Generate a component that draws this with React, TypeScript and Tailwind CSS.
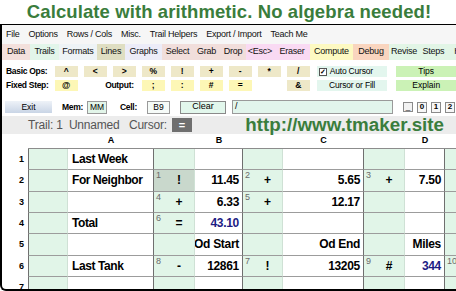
import React from 'react';

type Op = { idx?: string; sym?: string; sel?: boolean };
type Val = { text?: string; blue?: boolean };
type Row = { n: string; a?: string; ops: Op[]; vals: Val[] };

const tabs = [
  { label: 'Data', w: 'w-[28px]', bg: 'bg-[#f3e0dc]' },
  { label: 'Trails', w: 'w-[29px]', bg: 'bg-[#e2f5ea]' },
  { label: 'Formats', w: 'w-[38px]', bg: 'bg-[#eef3f6]' },
  { label: 'Lines', w: 'w-[28px]', bg: 'bg-[#dfdec2]' },
  { label: 'Graphs', w: 'w-[37px]', bg: 'bg-[#ececf8]' },
  { label: 'Select', w: 'w-[31px]', bg: 'bg-[#f1dedb]' },
  { label: 'Grab', w: 'w-[27px]', bg: 'bg-[#f1dedb]' },
  { label: 'Drop', w: 'w-[26px]', bg: 'bg-[#f1dedb]' },
  { label: '<Esc>', w: 'w-[28px]', bg: 'bg-[#f9daf3]' },
  { label: 'Eraser', w: 'w-[36px]', bg: 'bg-[#f9daf3]' },
  { label: 'Compute', w: 'w-[43px]', bg: 'bg-[#fdf9c2]' },
  { label: 'Debug', w: 'w-[36px]', bg: 'bg-[#f9d5bf]' },
  { label: 'Revise', w: 'w-[30px]', bg: 'bg-[#e2f5e6]' },
  { label: 'Steps', w: 'w-[29px]', bg: 'bg-[#e2f5e6]' },
  { label: 'Help', w: 'w-[30px]', bg: 'bg-[#e2f5e6]' },
];

const menu = ['File', 'Options', 'Rows / Cols', 'Misc.', 'Trail Helpers', 'Export / Import', 'Teach Me'];

const basicOps = ['^', '<', '>', '%', '!', '+', '-', '*', '/'];

const rows: Row[] = [
  { n: '1', a: 'Last Week', ops: [{}, {}, {}, {}], vals: [{}, {}, {}] },
  {
    n: '2',
    a: 'For Neighbor',
    ops: [{ idx: '1', sym: '!', sel: true }, { idx: '2', sym: '+' }, { idx: '3', sym: '+' }, {}],
    vals: [{ text: '11.45' }, { text: '5.65' }, { text: '7.50' }],
  },
  {
    n: '3',
    ops: [{ idx: '4', sym: '+' }, { idx: '5', sym: '+' }, {}, {}],
    vals: [{ text: '6.33' }, { text: '12.17' }, {}],
  },
  {
    n: '4',
    a: 'Total',
    ops: [{ idx: '6', sym: '=' }, {}, {}, {}],
    vals: [{ text: '43.10', blue: true }, {}, {}],
  },
  {
    n: '5',
    ops: [{}, {}, {}, {}],
    vals: [{ text: 'Od Start' }, { text: 'Od End' }, { text: 'Miles' }],
  },
  {
    n: '6',
    a: 'Last Tank',
    ops: [{ idx: '8', sym: '-' }, { idx: '7', sym: '!' }, { idx: '9', sym: '#' }, { idx: '10' }],
    vals: [{ text: '12861' }, { text: '13205' }, { text: '344', blue: true }],
  },
  { n: '7', ops: [{}, {}, {}, {}], vals: [{}, {}, {}] },
];

const cols = 'grid grid-cols-[26px_40px_86px_41px_48px_40px_81px_41px_40px_40px]';

function OpCell({ op }: { op: Op }) {
  return (
    <div
      className={`relative border-r border-r-[#cfe1d5] border-b border-b-[#9c9c9c] flex items-center justify-center pl-[10px] text-[12px] font-bold text-black ${
        op.sel ? 'bg-[#c9d8cc]' : 'bg-[#e1f5e8]'
      }`}
    >
      {op.idx && (
        <span className="absolute left-[2px] top-[1px] text-[9px] font-normal leading-none text-[#6a6a6a]">{op.idx}</span>
      )}
      {op.sym}
    </div>
  );
}

function ValCell({ v }: { v: Val }) {
  return (
    <div
      className={`bg-white border-r border-r-[#6f6f6f] border-b border-b-[#9c9c9c] flex items-center justify-end pr-[3px] whitespace-nowrap text-[12px] font-bold tracking-[-0.3px] ${
        v.blue ? 'text-[#1c1c84]' : 'text-black'
      }`}
    >
      {v.text}
    </div>
  );
}

export default function App() {
  return (
    <div className="w-[456px] h-[291px] overflow-hidden bg-white font-['Liberation_Sans',Arial,sans-serif] text-black">
      <div className="h-[24px] flex items-end justify-center pb-[3px] pl-[2px] text-[18.5px] font-bold leading-none text-[#3a7d3c] tracking-[0.1px]">
        Calculate with arithmetic. No algebra needed!
      </div>

      <div className="h-[267px] border-t border-l-2 border-b-2 border-black rounded-bl-[6px] overflow-hidden flex flex-col">
        {/* menu bar */}
        <div className="h-[19px] shrink-0 flex items-center gap-[9px] pl-[4px] bg-[#f6f6f6] text-[9px] tracking-[-0.25px] text-[#111]">
          {menu.map((m) => (
            <span key={m}>{m}</span>
          ))}
        </div>

        {/* tabs */}
        <div className="h-[16px] shrink-0 flex text-[9px] tracking-[-0.25px] text-[#111]">
          {tabs.map((t) => (
            <div key={t.label} className={`${t.w} ${t.bg} shrink-0 flex items-center justify-center`}>
              {t.label}
            </div>
          ))}
        </div>

        {/* ops */}
        <div className="shrink-0 pt-[6px] pl-[4px] flex flex-col gap-[3px] text-[8.5px]">
          <div className="flex items-center h-[11px]">
            <span className="w-[49px] font-bold tracking-[-0.3px]">Basic Ops:</span>
            <div className="flex gap-[6px]">
              {basicOps.map((o) => (
                <div key={o} className="w-[23px] h-[11px] bg-[#eee8c8] flex items-center justify-center font-bold">
                  {o}
                </div>
              ))}
            </div>
            <div className="ml-[7px] w-[71px] h-[11px] bg-[#e3f6ee] flex items-center pl-[2px] gap-[3px]">
              <span className="w-[8px] h-[8px] border border-[#555] bg-white flex items-center justify-center text-[7px] leading-none font-bold">
                ✓
              </span>
              <span className="tracking-[-0.2px]">Auto Cursor</span>
            </div>
            <div className="ml-[9px] w-[60px] h-[11px] bg-[#cbf2b6] flex items-center justify-center">Tips</div>
          </div>
          <div className="flex items-center h-[11px]">
            <span className="w-[49px] font-bold tracking-[-0.3px]">Fixed Step:</span>
            <div className="flex gap-[6px]">
              <div className="w-[23px] h-[11px] bg-[#fdf7b6] flex items-center justify-center font-bold">@</div>
              <div className="w-[52px] h-[11px] flex items-center justify-end pr-[2px] font-bold tracking-[-0.3px]">
                Output:
              </div>
              {[';', ':', '#', '='].map((o) => (
                <div key={o} className="w-[23px] h-[11px] bg-[#fdf7b6] flex items-center justify-center font-bold">
                  {o}
                </div>
              ))}
              <div className="w-[23px] h-[11px]" />
              <div className="w-[23px] h-[11px] bg-[#eee8c8] flex items-center justify-center font-bold">&amp;</div>
            </div>
            <div className="ml-[7px] w-[71px] h-[11px] bg-[#e3f6ee] flex items-center justify-center tracking-[-0.2px]">
              Cursor or Fill
            </div>
            <div className="ml-[9px] w-[60px] h-[11px] bg-[#cbf2b6] flex items-center justify-center">Explain</div>
          </div>
        </div>

        {/* exit row */}
        <div className="shrink-0 mt-[9px] h-[14px] flex items-center text-[8.5px]">
          <div className="ml-[3px] w-[47px] h-[12px] bg-gradient-to-b from-[#eef2f8] to-[#c9d5e6] flex items-center justify-center">
            Exit
          </div>
          <span className="ml-[10px] font-bold tracking-[-0.3px]">Mem:</span>
          <div className="ml-[4px] w-[20px] h-[13px] border border-[#9a9a9a] bg-[#e2f5e9] flex items-center justify-center">MM</div>
          <span className="ml-[13px] font-bold tracking-[-0.3px]">Cell:</span>
          <div className="ml-[10px] w-[23px] h-[13px] border border-[#9a9a9a] bg-[#f6fbf8] flex items-center justify-center">B9</div>
          <div className="ml-[10px] w-[46px] h-[13px] border border-[#8a8a8a] bg-[#e2f7ec] flex items-center justify-center text-[9px]">
            Clear
          </div>
          <div className="ml-[6px] w-[161px] h-[14px] border border-[#9a9a9a] bg-[#e2f5ec] flex items-center pl-[2px] text-[9px]">
            /
          </div>
          <div className="ml-[10px] w-[10px] h-[10px] border border-[#8a8a8a] bg-[#f2f2f2] flex items-end justify-center leading-none text-[8px]">
            _
          </div>
          {['0', '1', '2'].map((d) => (
            <div
              key={d}
              className="ml-[4px] w-[10px] h-[11px] border border-[#8a8a8a] bg-[#f7f7f7] flex items-center justify-center text-[8px] font-bold"
            >
              {d}
            </div>
          ))}
        </div>

        {/* trail row */}
        <div className="shrink-0 mt-[2px] h-[18px] bg-[#ececec] flex items-center pl-[26px]">
          <span className="whitespace-pre text-[12px] tracking-[-0.2px] text-[#555]">Trail: 1  Unnamed   Cursor:</span>
          <div className="ml-[5px] w-[20px] h-[14px] bg-[#6f6f6f] flex items-center justify-center text-white text-[11px] font-bold">
            =
          </div>
          <span className="ml-auto mr-[12px] text-[18.8px] font-bold leading-none text-[#3a7d3c]">http://www.tmaker.site</span>
        </div>

        {/* sheet */}
        <div className={`${cols} shrink-0 h-[15px] text-[9px] font-bold`}>
          <div />
          <div className="border-b border-b-[#8c8c8c]" />
          <div className="border-b border-b-[#8c8c8c] flex items-center justify-center">A</div>
          <div className="border-b border-b-[#8c8c8c]" />
          <div className="border-b border-b-[#8c8c8c] flex items-center justify-center">B</div>
          <div className="border-b border-b-[#8c8c8c]" />
          <div className="border-b border-b-[#8c8c8c] flex items-center justify-center">C</div>
          <div className="border-b border-b-[#8c8c8c]" />
          <div className="border-b border-b-[#8c8c8c] flex items-center justify-center">D</div>
          <div className="border-b border-b-[#8c8c8c]" />
        </div>
        {rows.map((r) => (
          <div key={r.n} className={`${cols} shrink-0 h-[21.33px]`}>
            <div className="flex items-center justify-end pr-[4px] text-[9px] font-bold">{r.n}</div>
            <div className="bg-[#e1f5e8] border-l border-l-[#6f6f6f] border-r border-r-[#cfe1d5] border-b border-b-[#9c9c9c]" />
            <div className="bg-white border-r border-r-[#6f6f6f] border-b border-b-[#9c9c9c] flex items-center pl-[4px] whitespace-nowrap text-[12px] font-bold tracking-[-0.4px]">
              {r.a}
            </div>
            <OpCell op={r.ops[0]} />
            <ValCell v={r.vals[0]} />
            <OpCell op={r.ops[1]} />
            <ValCell v={r.vals[1]} />
            <OpCell op={r.ops[2]} />
            <ValCell v={r.vals[2]} />
            <OpCell op={r.ops[3]} />
          </div>
        ))}
      </div>
    </div>
  );
}
